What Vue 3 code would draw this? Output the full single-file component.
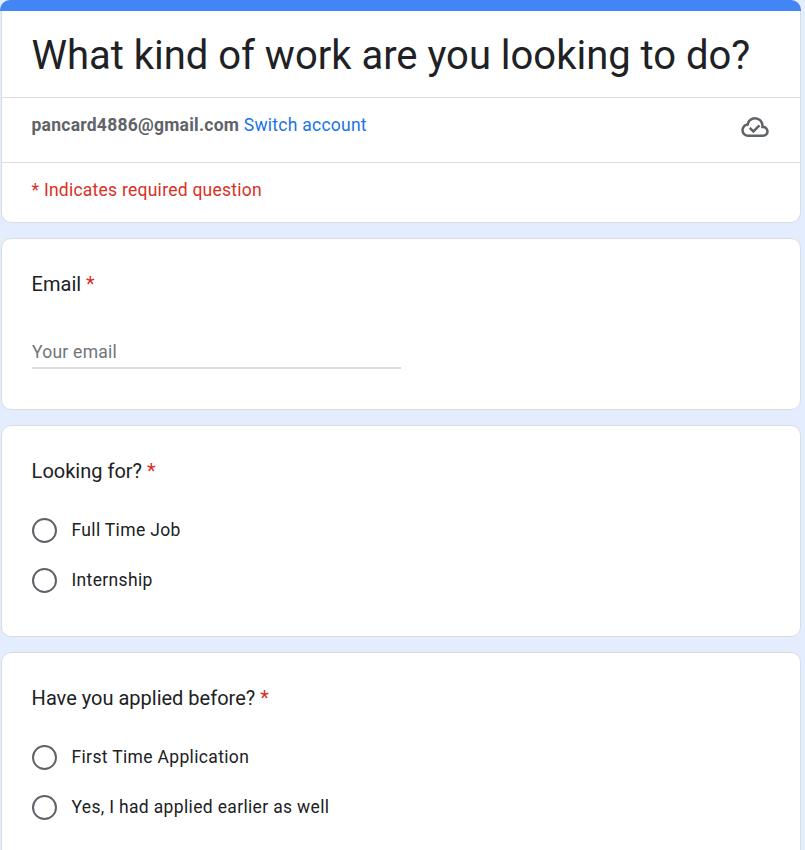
<script setup>
const questions = [
  { title: 'Looking for?', options: ['Full Time Job', 'Internship'] },
  { title: 'Have you applied before?', options: ['First Time Application', 'Yes, I had applied earlier as well'] },
]
</script>

<template>
  <main class="page">
    <div class="form">
      <header class="card head">
        <div class="strip"></div>
        <h1 class="title">What kind of work are you looking to do?</h1>
        <div class="account">
          <div class="who"><b>pancard4886@gmail.com</b> <a class="switch">Switch account</a></div>
          <svg class="cloud" viewBox="0 0 24 24" width="30" height="30">
            <path
              fill="#5f6368"
              fill-rule="evenodd"
              d="M6.5 20Q4.22 20 2.61 18.43 1 16.85 1 14.58 1 12.63 2.17 11.1 3.35 9.57 5.25 9.15 5.88 6.85 7.75 5.43 9.63 4 12 4 14.93 4 16.96 6.04 19 8.07 19 11 20.73 11.2 21.86 12.5 23 13.78 23 15.5 23 17.38 21.69 18.69 20.38 20 18.5 20ZM6.5 18H18.5Q19.55 18 20.27 17.27 21 16.55 21 15.5 21 14.45 20.27 13.73 19.55 13 18.5 13H17V11Q17 8.93 15.54 7.46 14.07 6 12 6 9.93 6 8.46 7.46 7 8.93 7 11H6.5Q5.05 11 4.03 12.03 3 13.05 3 14.5 3 15.95 4.03 16.98 5.05 18 6.5 18Z"
            />
            <path fill="none" stroke="#5f6368" stroke-width="2" d="M7.8 12.7l2.9 2.9 4.9-4.9" />
          </svg>
        </div>
        <div class="note">* Indicates required question</div>
      </header>

      <section class="card email">
        <div class="question">Email <span class="star">*</span></div>
        <input class="field" type="email" placeholder="Your email" />
      </section>

      <section v-for="q in questions" :key="q.title" class="card choice">
        <div class="question">{{ q.title }} <span class="star">*</span></div>
        <div class="options">
          <label v-for="o in q.options" :key="o" class="option">
            <span class="radio"></span>
            <span class="text">{{ o }}</span>
          </label>
        </div>
      </section>
    </div>
  </main>
</template>

<style>
body {
  background: #e3edfd;
}
</style>

<style scoped>
.page {
  box-sizing: border-box;
  height: 850px;
  overflow: hidden;
  background: #e3edfd;
  font-family: Roboto, "Liberation Sans", sans-serif;
  font-size: 17.5px;
  letter-spacing: 0.25px;
  color: #202124;
}
.form {
  display: flex;
  flex-direction: column;
  gap: 15px;
  width: 800px;
  margin-left: 1px;
}
.card {
  box-sizing: border-box;
  flex: none;
  background: #fff;
  border: 1px solid #dadce0;
  border-radius: 10px;
  padding: 30px 30px 0;
}
.head {
  height: 223px;
  padding: 0;
  border-top: 0;
}
.strip {
  height: 11px;
  margin: 0 -1px 0 -2px;
  background: #4285f4;
  border-radius: 10px 10px 0 0;
}
.title {
  box-sizing: border-box;
  height: 86px;
  margin: 0;
  padding: 20px 29.5px 0;
  font-size: 40px;
  font-weight: 400;
  line-height: 50px;
  letter-spacing: -0.01px;
  white-space: nowrap;
}
.account {
  box-sizing: border-box;
  display: flex;
  justify-content: space-between;
  height: 65px;
  padding: 14px 30.5px 0 29.5px;
  border-top: 1px solid #dadce0;
  color: #5f6368;
  line-height: 26px;
}
.switch {
  color: #1a73e8;
}
.cloud {
  display: block;
}
.note {
  padding: 14px 29.5px 0;
  border-top: 1px solid #dadce0;
  color: #d93025;
  line-height: 26px;
}
.question {
  margin-left: -0.4px;
  font-size: 20px;
  line-height: 30px;
  letter-spacing: 0;
}
.star {
  color: #d93025;
}
.email {
  height: 172px;
}
.field {
  box-sizing: border-box;
  display: block;
  width: 369px;
  height: 32px;
  margin: 38px 0 0;
  padding: 0;
  border: 0;
  border-bottom: 2px solid #dedede;
  outline: 0;
  background: none;
  font: inherit;
  letter-spacing: 0.25px;
}
.field::placeholder {
  color: #70757a;
}
.choice {
  height: 212px;
}
.options {
  padding-top: 20px;
}
.option {
  display: flex;
  gap: 14.5px;
  box-sizing: border-box;
  height: 50px;
  padding-top: 12px;
}
.radio {
  box-sizing: border-box;
  width: 25px;
  height: 25px;
  border: 2px solid #5f6368;
  border-radius: 50%;
}
.text {
  line-height: 24px;
  letter-spacing: 0.34px;
}
</style>
